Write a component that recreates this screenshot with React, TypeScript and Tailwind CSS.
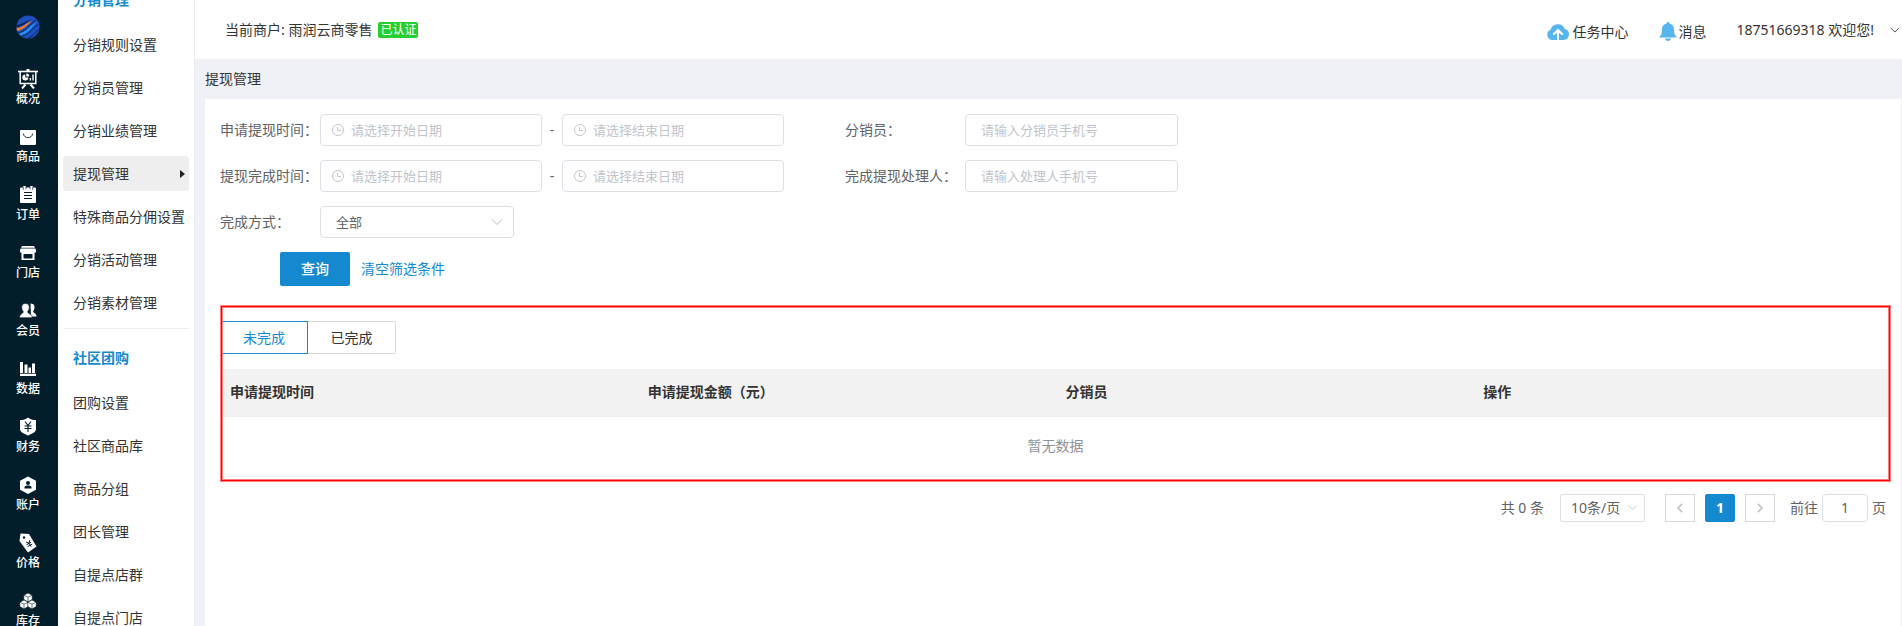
import React from "react";

const railItems = [
  { name: "概况", icon: "board" },
  { name: "商品", icon: "bag" },
  { name: "订单", icon: "order" },
  { name: "门店", icon: "shop" },
  { name: "会员", icon: "member" },
  { name: "数据", icon: "data" },
  { name: "财务", icon: "money" },
  { name: "账户", icon: "account" },
  { name: "价格", icon: "price" },
  { name: "库存", icon: "stock" },
];

const distributionMenu = [
  "分销规则设置",
  "分销员管理",
  "分销业绩管理",
  "提现管理",
  "特殊商品分佣设置",
  "分销活动管理",
  "分销素材管理",
];

const groupMenu = [
  "团购设置",
  "社区商品库",
  "商品分组",
  "团长管理",
  "自提点店群",
  "自提点门店",
];

const columns = ["申请提现时间", "申请提现金额（元）", "分销员", "操作"];

const dark = "#031e2b";

const RailIcon = ({ name }: { name: string }) => {
  switch (name) {
    case "board":
      return (
        <g fill="none" stroke="#fff">
          <path d="M0 2.5h20" strokeWidth="1.6" />
          <path d="M10 0v2" strokeWidth="3" />
          <path d="M2.2 2.5v12h15.6v-12" strokeWidth="1.5" />
          <path d="M7.5 15.5 4 19.5M12.5 15.5l3.5 4" strokeWidth="2" />
          <path d="M12.4 11.5V9M15 11.5v-6" strokeWidth="1.4" />
          <path d="M7.3 5.5a3 3 0 1 0 3 3h-3z" fill="#fff" stroke="none" />
          <path d="M8.3 4.5v3h3a3 3 0 0 0-3-3z" fill="#fff" stroke="none" />
        </g>
      );
    case "bag":
      return (
        <g>
          <rect x="2" y="3" width="16" height="15" rx="1" fill="#fff" />
          <path d="M5.5 6.500c0 5.500 9 5.500 9 0" fill="none" stroke={dark} strokeWidth="0.9" />
        </g>
      );
    case "order":
      return (
        <g>
          <rect x="2" y="2.5" width="16" height="15.500" rx="1" fill="#fff" />
          <path d="M6.5 1v3.5M13.5 1v3.5" stroke="#fff" strokeWidth="2.5" />
          <path d="M5.3 2v3M8 2v2.5M12 2v2.500M14.7 2v3" stroke={dark} strokeWidth="0.6" />
          <path d="M6 7.500h8M6 10.500h8M6 13.500h8" stroke={dark} strokeWidth="1" />
        </g>
      );
    case "shop":
      return (
        <g>
          <path d="M4 3h12l2 4v1.500a2 2 0 0 1-2 1.500H4a2 2 0 0 1-2-1.500V7z" fill="#fff" />
          <path d="M3.500 10h13v7h-13z" fill="#fff" />
          <path d="M5.500 11h9v4.500h-9z" fill={dark} />
          <path d="M3 5.200h14" stroke={dark} strokeWidth="0.7" />
        </g>
      );
    case "member":
      return (
        <g fill="#fff">
          <path d="M12.500 2.500c4 0 4.500 3 3.800 5.500-.3 1-.8 1.800-1.200 2.400.3 1.800 3.400 1.500 3.400 5H13z" />
          <path
            d="M7.500 2.500c3 0 4 2 3.800 4.500-.1 1.700-.9 3-1.700 3.800.2 2 4.700 1.700 4.700 6H1.500c0-4 3.500-4 3.800-6C4.500 10 3.800 8.700 3.700 7 3.500 4.500 4.500 2.500 7.500 2.500z"
            stroke={dark}
            strokeWidth="0.7"
          />
        </g>
      );
    case "data":
      return (
        <path d="M2 3h3v11H2zM6.500 5.500h3V14h-3zM10.500 8.500h2.500V14h-2.500zM14 4.500h3V14h-3zM2 14.700h16V17H2z" fill="#fff" />
      );
    case "money":
      return (
        <g>
          <path d="M10 .5c2 2 5 2.500 8 2.500v9c0 3.500-5 5-8 6.500-3-1.500-8-3-8-6.500V3c3 0 6-.5 8-2.500z" fill="#fff" />
          <path d="m7 4.500 3 4 3-4M10 8.500V15M6.500 9h7M6.500 11.500h7" stroke={dark} strokeWidth="1.1" fill="none" />
        </g>
      );
    case "account":
      return (
        <g>
          <path d="m10 1.500 8 4.200v9L10 19l-8-4.300v-9z" fill="#fff" />
          <circle cx="10" cy="8" r="2" fill={dark} />
          <path d="M6.500 13.500v-1c0-1.500 1.500-2 3.500-2s3.500.5 3.500 2v1z" fill={dark} />
        </g>
      );
    case "price":
      return (
        <g>
          <path d="M2.500.5 11 1l7.500 12.500-8.500 6L1.500 8z" fill="#fff" strokeLinejoin="round" />
          <circle cx="6" cy="4.500" r="1.200" fill={dark} />
          <path d="m8 9 3 1.300.8-3.200M11 10.300l2.200 3.400M8.500 11.800l4.600-2.500M9.600 13.600l4.600-2.500" stroke={dark} strokeWidth="1" fill="none" />
        </g>
      );
    default:
      return (
        <g fill="#fff" stroke={dark} strokeWidth="0.6">
          <path d="m10 2 4.200 2.200v4.300L10 11 5.800 8.500V4.200z" />
          <path d="m6 9 4.200 2.200v4.300L6 18l-4.200-2.500v-4.300z" />
          <path d="m14 9 4.200 2.200v4.300L14 18l-4.200-2.500v-4.300z" />
          <path d="m5.800 4.200 4.200 2 4.200-2M10 6.200V11M1.800 11.200l4.200 2 4.200-2 3.800 2 4.200-2M6 13.200V18M14 13.200V18" fill="none" />
        </g>
      );
  }
};

const Logo = () => (
  <svg viewBox="0 0 24 24" className="h-6 w-6 shrink-0" aria-hidden="true">
    <circle cx="12" cy="12" r="11.500" fill="#1d4fc0" />
    <path d="M.6 10C5 10 9 5.500 17 4.500 11 6 7 12 .6 12z" fill="#0a2450" />
    <path d="M.5 13c6 0 9-5 16-7.500-4 3-8 9.500-15.500 10.500z" fill="#f07a2c" />
    <path d="M3 18.500C11 17 13 10 22 6.500 16 11 14 18 5 20.500z" fill="#2f8df0" />
    <path d="M3 17.500C11 16 13 9 20 5.500M6 21C14 19 16 13 22.500 9.500M12 23c6-2 7-6 10.500-8" fill="none" stroke="#0a2a55" strokeWidth="1" />
  </svg>
);

const Chevron = ({ className }: { className: string }) => (
  <svg viewBox="0 0 12 12" className={className} fill="none" stroke="currentColor" aria-hidden="true">
    <path d="m1 3.500 5 5 5-5" />
  </svg>
);

const SideLink = ({ name, active = false }: { name: string; active?: boolean }) => (
  <a
    href="#"
    className={
      active
        ? "mb-2 flex h-[35px] shrink-0 items-center justify-between rounded bg-[#eeeeee] pr-1 pl-[10px] whitespace-nowrap"
        : "mb-2 flex h-[35px] shrink-0 items-center pl-[10px] whitespace-nowrap"
    }
  >
    {name}
    {active && (
      <svg viewBox="0 0 5 8" className="h-2 w-[5px]" aria-hidden="true">
        <path d="M0 0l5 4-5 4z" fill="#222" />
      </svg>
    )}
  </a>
);

const DateInput = ({ id, label, placeholder }: { id: string; label: string; placeholder: string }) => (
  <div className="flex h-8 w-[222px] items-center rounded border border-[#dcdfe6] pl-[11px]">
    <svg viewBox="0 0 12 12" className="h-3 w-3 shrink-0" fill="none" stroke="#c0c4cc" aria-hidden="true">
      <circle cx="6" cy="6" r="5.500" />
      <path d="M5.500 3v3.500h3.500" />
    </svg>
    <input
      id={id}
      aria-label={label}
      placeholder={placeholder}
      className="ml-[7px] w-full min-w-0 text-[13px] outline-none placeholder:text-[#c0c4cc]"
    />
  </div>
);

const DateRange = ({ id, label }: { id: string; label: string }) => (
  <div className="flex items-center">
    <label htmlFor={id} className="w-[100px]">
      {label}：
    </label>
    <DateInput id={id} label={label + "开始"} placeholder="请选择开始日期" />
    <span className="w-5 text-center">-</span>
    <DateInput id={id + "-end"} label={label + "结束"} placeholder="请选择结束日期" />
  </div>
);

const TextField = ({ id, label, placeholder }: { id: string; label: string; placeholder: string }) => (
  <div className="flex items-center">
    <label htmlFor={id} className="w-[120px]">
      {label}：
    </label>
    <input
      id={id}
      placeholder={placeholder}
      className="h-8 w-[213px] rounded border border-[#dcdfe6] px-[15px] text-[13px] outline-none placeholder:text-[#c0c4cc]"
    />
  </div>
);

const App = () => {
  return (
    <div className="flex h-screen overflow-hidden bg-[#f0f1f6] font-['Noto_Sans','Noto_Sans_CJK_SC',sans-serif] text-sm text-[#333333]">
      <nav className="flex w-[58px] shrink-0 flex-col items-center overflow-hidden bg-[#031e2b] pt-[15px] pr-0.5 text-white">
        <Logo />
        <ul className="mt-[30px]">
          {railItems.map((item) => (
            <li key={item.name} className="h-[58px]">
              <a href="#" className="flex flex-col items-center text-xs font-medium">
                <svg viewBox="0 0 20 20" className="h-5 w-5" aria-hidden="true">
                  <RailIcon name={item.icon} />
                </svg>
                <span className="leading-5">{item.name}</span>
              </a>
            </li>
          ))}
        </ul>
      </nav>

      <aside className="flex w-[137px] shrink-0 flex-col overflow-hidden border-r border-[#e8eaef] bg-white px-[5px]">
        <h2 className="-mt-[11px] mb-[17px] shrink-0 pl-[10px] leading-[21px] font-bold text-[#1589d0]">分销管理</h2>
        {distributionMenu.map((name) => (
          <SideLink key={name} name={name} active={name === "提现管理"} />
        ))}
        <hr className="shrink-0 border-[#eeeeee]" />
        <h2 className="mt-[18px] mb-[17px] shrink-0 pl-[10px] leading-[21px] font-bold text-[#1589d0]">社区团购</h2>
        {groupMenu.map((name) => (
          <SideLink key={name} name={name} />
        ))}
      </aside>

      <div className="flex min-w-0 flex-1 flex-col">
        <header className="flex h-[59px] shrink-0 items-center bg-white pr-[2px] pl-[30px]">
          <span>当前商户: 雨润云商零售</span>
          <span className="ml-1.5 rounded-xs bg-[#26cf2f] px-0.5 text-xs leading-4 text-white">已认证</span>
          <a href="#" className="mt-1 ml-auto flex items-center">
            <svg viewBox="0 0 22 16" className="h-4 w-[22px]" aria-hidden="true">
              <path d="M5.500 16A5.300 5.300 0 0 1 3.600 5.800 7.500 7.500 0 0 1 17.800 5a5.600 5.600 0 0 1-1.300 11z" fill="#56b4ef" />
              <path d="M11 4.500 16.500 10l-1.500 1.300-3-2.600V16h-2V8.700l-3 2.600L5.500 10z" fill="#fff" />
            </svg>
            <span className="ml-1">任务中心</span>
          </a>
          <a href="#" className="mt-1 ml-[30px] flex items-center">
            <svg viewBox="0 0 18 19" className="h-[19px] w-[18px]" aria-hidden="true">
              <path d="M9 0c1 0 1.500.7 1.500 1.500C14 2.300 15 5 15 8c0 4 1 5.500 3 7.500H0C2 13.500 3 12 3 8c0-3 1-5.700 4.500-6.500C7.500.7 8 0 9 0zM6 16.500h6c-.3 1.500-1.500 2.500-3 2.500s-2.700-1-3-2.500z" fill="#56b4ef" />
            </svg>
            <span className="ml-0.5">消息</span>
          </a>
          <button type="button" className="ml-[30px] flex items-center">
            18751669318 欢迎您!
            <Chevron className="ml-4 h-[10px] w-[10px]" />
          </button>
        </header>

        <h1 className="flex h-10 shrink-0 items-center pl-[10px]">提现管理</h1>

        <main className="mr-px ml-[10px] flex-1 bg-white pt-[15px] pr-[10px] pl-[15px] text-[#606266]">
          <form className="flex flex-col" onSubmit={(e) => e.preventDefault()}>
            <div className="flex gap-[61px]">
              <div className="flex flex-col gap-[14px]">
                <DateRange id="apply" label="申请提现时间" />
                <DateRange id="finish" label="提现完成时间" />
                <div className="flex items-center">
                  <label htmlFor="way" className="w-[100px]">
                    完成方式：
                  </label>
                  <div className="relative">
                    <select
                      id="way"
                      className="h-8 w-[194px] appearance-none rounded border border-[#dcdfe6] bg-white px-[15px] text-[13px]"
                    >
                      <option>全部</option>
                    </select>
                    <Chevron className="pointer-events-none absolute top-[10px] right-[11px] h-3 w-3 text-[#b4b8c0]" />
                  </div>
                </div>
              </div>
              <div className="flex flex-col gap-[14px]">
                <TextField id="seller" label="分销员" placeholder="请输入分销员手机号" />
                <TextField id="handler" label="完成提现处理人" placeholder="请输入处理人手机号" />
              </div>
            </div>
            <div className="mt-[14px] flex items-center pl-[60px]">
              <button type="submit" className="h-[34px] w-[70px] rounded-xs bg-[#1589d0] font-medium text-white">
                查询
              </button>
              <button type="reset" className="ml-[11px] text-[#1589d0]">
                清空筛选条件
              </button>
            </div>
          </form>

          <section className="relative mt-[19px] pt-4 pb-[5px] text-[#333333]">
            <div className="flex">
              <button type="button" className="h-[33px] w-[88px] border border-[#1589d0] text-[#1589d0]">
                未完成
              </button>
              <button type="button" className="h-[33px] w-[88px] rounded-r-xs border border-l-0 border-[#d9d9d9]">
                已完成
              </button>
            </div>
            <table className="mt-[15px] w-full table-fixed">
              <thead>
                <tr className="h-[47px] border-b border-[#ebeef5] bg-[#f2f2f2]">
                  {columns.map((col) => (
                    <th key={col} className="pl-[10px] text-left font-bold">
                      {col}
                    </th>
                  ))}
                </tr>
              </thead>
              <tbody>
                <tr className="h-[60px] border-b border-[#ebeef5]">
                  <td colSpan={4} className="text-center text-[#909399]">
                    暂无数据
                  </td>
                </tr>
              </tbody>
            </table>
            <div className="pointer-events-none absolute inset-px border border-[#ff0000] shadow-[0_0_0_1px_#ff7f7f,inset_0_0_0_1px_#ff7f7f]"></div>
          </section>

          <div className="mt-3 flex items-center justify-end pr-[5px]">
            <span>共 0 条</span>
            <div className="relative ml-4">
              <select
                aria-label="每页条数"
                className="block h-7 w-[85px] appearance-none rounded-xs border border-[#dcdfe6] bg-white pl-[10px]"
              >
                <option>10条/页</option>
              </select>
              <Chevron className="pointer-events-none absolute top-[9px] right-2 h-[9px] w-[9px] text-[#b4b8c0]" />
            </div>
            <button
              type="button"
              aria-label="上一页"
              className="ml-5 flex h-7 w-[30px] items-center justify-center border border-[#d9d9d9] text-[#c0c4cc]"
            >
              <Chevron className="h-[10px] w-[10px] rotate-90 stroke-2" />
            </button>
            <button type="button" className="ml-[10px] h-7 w-[30px] rounded-xs bg-[#1589d0] font-bold text-white">
              1
            </button>
            <button
              type="button"
              aria-label="下一页"
              className="ml-[10px] flex h-7 w-[30px] items-center justify-center border border-[#d9d9d9] text-[#c0c4cc]"
            >
              <Chevron className="h-[10px] w-[10px] -rotate-90 stroke-2" />
            </button>
            <label htmlFor="page" className="ml-[15px]">
              前往
            </label>
            <input
              id="page"
              defaultValue="1"
              className="mx-1 h-7 w-[46px] rounded border border-[#dcdfe6] text-center outline-none"
            />
            <span>页</span>
          </div>
        </main>
      </div>
    </div>
  );
};

export default App;
